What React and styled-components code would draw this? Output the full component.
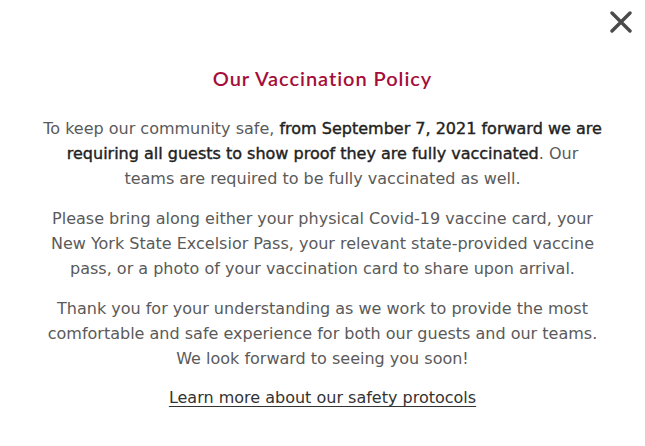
import React from 'react'
import styled, { createGlobalStyle } from 'styled-components'

const Global = createGlobalStyle`
  html, body { margin: 0; padding: 0; background: #fff; }
  body { font-family: "DejaVu Sans", "Open Sans", sans-serif; }
`

const Modal = styled.div`
  position: relative;
  width: 645px;
  height: 446px;
  box-sizing: border-box;
  padding: 65px 20px 0;
  display: flex;
  flex-direction: column;
  align-items: center;
  background: #fff;
`

const Close = styled.button`
  position: absolute;
  top: 11px;
  right: 13px;
  width: 22px;
  height: 22px;
  padding: 0;
  border: 0;
  background: none;
  cursor: pointer;
`

const Title = styled.h2`
  margin: 0 0 25px;
  font-family: "Lato", "Open Sans", sans-serif;
  font-size: 20px;
  font-weight: 600;
  letter-spacing: 0.95px;
  color: #a50d3b;
  line-height: 26px;
`

const Para = styled.p`
  margin: 0 0 15px;
  font-size: 16px;
  line-height: 25px;
  color: #5a5a5a;
  text-align: center;
  font-weight: 400;
`

const Strong = styled.span`
  color: #222;
  font-weight: 500;
  -webkit-text-stroke: 0.4px #222;
`

const Link = styled.a`
  margin-top: -1px;
  font-size: 16px;
  line-height: 25px;
  color: #333;
  text-decoration: underline;
  text-underline-offset: 3px;
`

export default function App() {
  return (
    <Modal>
      <Global />
      <Close aria-label="Close">
        <svg width="22" height="22" viewBox="0 0 22 22">
          <path d="M2 2 L20 20 M20 2 L2 20" stroke="#4a4a4a" strokeWidth="3.4" strokeLinecap="round" />
        </svg>
      </Close>
      <Title>Our Vaccination Policy</Title>
      <Para>
        To keep our community safe, <Strong>from September 7, 2021 forward we are<br />
        requiring all guests to show proof they are fully vaccinated</Strong>. Our<br />
        teams are required to be fully vaccinated as well.
      </Para>
      <Para>
        Please bring along either your physical Covid-19 vaccine card, your<br />
        New York State Excelsior Pass, your relevant state-provided vaccine<br />
        pass, or a photo of your vaccination card to share upon arrival.
      </Para>
      <Para>
        Thank you for your understanding as we work to provide the most<br />
        comfortable and safe experience for both our guests and our teams.<br />
        We look forward to seeing you soon!
      </Para>
      <Link href="#">Learn more about our safety protocols</Link>
    </Modal>
  )
}
